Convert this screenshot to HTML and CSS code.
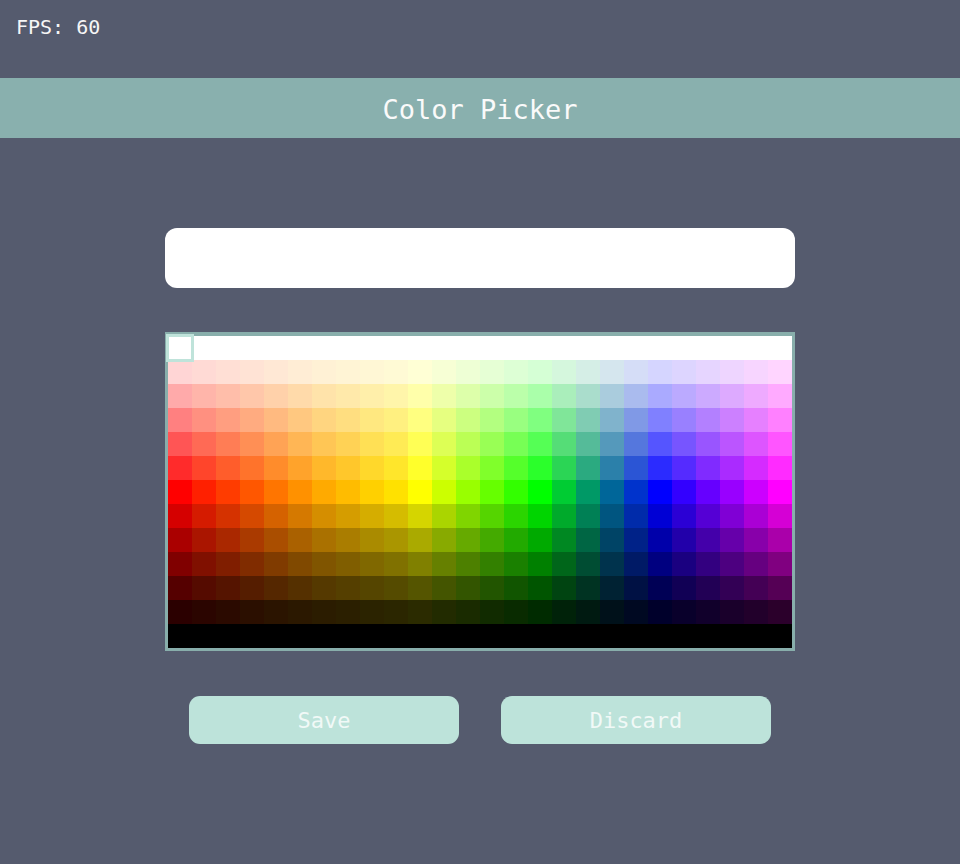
FILE: index.html
```html
<!DOCTYPE html>
<html lang="en">
<head>
<meta charset="utf-8">
<title>Color Picker</title>
<link rel="stylesheet" href="styles.css">
</head>
<body>
<div class="fps">FPS: 60</div>
<header class="titlebar"><h1 class="title">Color Picker</h1></header>
<main class="panel">
  <div class="name-input"></div>
  <div class="palette">
    <div class="cells" id="cells"></div>
    <div class="selected"></div>
  </div>
  <div class="actions">
    <button class="btn">Save</button>
    <button class="btn">Discard</button>
  </div>
</main>
<script src="app.js"></script>
</body>
</html>
```

FILE: styles.css
```css
html, body {
  margin: 0;
  padding: 0;
}
body {
  background: #555b6e;
  width: 960px;
  height: 864px;
  overflow: hidden;
  font-family: "DejaVu Sans Mono", "Liberation Mono", monospace;
  color: #ffffff;
}
.fps {
  box-sizing: border-box;
  height: 78px;
  padding: 15px 0 0 16px;
  font-size: 20px;
  line-height: 24px;
  color: #f6f6f6;
}
.titlebar {
  height: 60px;
  background: #89b0ae;
  display: flex;
  align-items: center;
  justify-content: center;
}
.title {
  margin: 4px 0 0;
  font-size: 27px;
  font-weight: normal;
  line-height: 32px;
  color: #fafafa;
}
.panel {
  width: 630px;
  margin: 90px auto 0;
  display: flex;
  flex-direction: column;
}
.name-input {
  height: 60px;
  background: #ffffff;
  border-radius: 12px;
}
.palette {
  position: relative;
  margin-top: 44px;
  border: 3px solid #88aeab;
  border-top-width: 4px;
  width: 624px;
  height: 312px;
}
.cells {
  display: grid;
  grid-template-columns: repeat(26, 24px);
  grid-template-rows: repeat(13, 24px);
}
.cell {
  width: 24px;
  height: 24px;
}
.selected {
  position: absolute;
  left: -2px;
  top: -2px;
  width: 28px;
  height: 28px;
  box-sizing: border-box;
  border: 3px solid #bfe3da;
}
.actions {
  margin-top: 45px;
  padding: 0 24px;
  display: flex;
  justify-content: space-between;
}
.btn {
  width: 270px;
  height: 48px;
  border: 0;
  border-radius: 11px;
  background: #bde3da;
  color: #f1f9f7;
  font-family: "DejaVu Sans Mono", "Liberation Mono", monospace;
  font-size: 22px;
  padding: 0;
}
```

FILE: app.js
```js
(function () {
  var pure = [
    "FF0000", "FF2000", "FF3C00", "FF5700", "FF7500", "FF9100", "FFAA00",
    "FFBC00", "FFD000", "FFE100", "FFFF00", "CCFF00", "99FF00", "66FF00",
    "33FF00", "00FF00", "00CC33", "009966", "006699", "0033CC", "0000FF",
    "3300FF", "6600FF", "9900FF", "CC00FF", "FF00FF"
  ];
  function rgb(hex) {
    return [parseInt(hex.substr(0, 2), 16), parseInt(hex.substr(2, 2), 16), parseInt(hex.substr(4, 2), 16)];
  }
  var grid = document.getElementById("cells");
  var frag = document.createDocumentFragment();
  for (var r = 0; r < 13; r++) {
    for (var c = 0; c < 26; c++) {
      var p = rgb(pure[c]);
      var out;
      if (r <= 6) {
        var w = (6 - r) / 6;
        out = p.map(function (v) { return Math.round(v + (255 - v) * w); });
      } else {
        var f = (12 - r) / 6;
        out = p.map(function (v) { return Math.round(v * f); });
      }
      var d = document.createElement("div");
      d.className = "cell";
      d.style.background = "rgb(" + out.join(",") + ")";
      frag.appendChild(d);
    }
  }
  grid.appendChild(frag);
})();
```
